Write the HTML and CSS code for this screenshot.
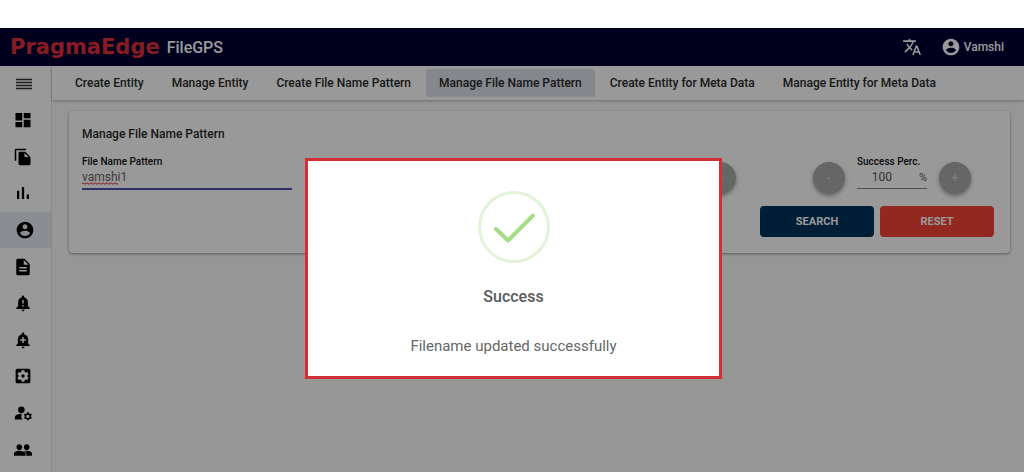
FILE: index.html
```html
<!DOCTYPE html>
<html lang="en">
<head>
<meta charset="utf-8">
<title>FileGPS</title>
<link rel="stylesheet" href="styles.css">
</head>
<body>
<div class="app">
  <header class="topbar">
    <span class="logo">PragmaEdge</span>
    <span class="product">FileGPS</span>
    <button class="topbar-btn translate" aria-label="Change language">
      <svg class="icon-lg" viewBox="0 0 24 24"><path d="M12.65 15.67c.14-.36.05-.77-.23-1.05l-2.09-2.06.03-.03c1.74-1.94 2.98-4.17 3.71-6.53h1.94c.54 0 .99-.45.99-.99v-.02c0-.54-.45-.99-.99-.99H10V3c0-.55-.45-1-1-1s-1 .45-1 1v1H1.99c-.54 0-.99.45-.99.99 0 .55.45.99.99.99h10.18C11.5 7.92 10.44 9.75 9 11.35c-.81-.89-1.49-1.86-2.06-2.88-.16-.29-.45-.47-.78-.47-.69 0-1.13.75-.79 1.35.63 1.13 1.4 2.21 2.3 3.21L3.3 16.87c-.4.39-.4 1.03 0 1.42.39.39 1.02.39 1.42 0L9 14l2.02 2.02c.51.51 1.38.32 1.63-.35zM17.5 10c-.6 0-1.14.37-1.35.94l-3.67 9.8c-.24.61.22 1.26.87 1.26.39 0 .74-.24.88-.61l.89-2.39h4.75l.9 2.39c.14.36.49.61.88.61.65 0 1.11-.65.88-1.26l-3.67-9.8c-.22-.57-.76-.94-1.36-.94zm-1.62 7 1.62-4.33L19.12 17h-3.24z"/></svg>
    </button>
    <button class="topbar-btn">
      <svg class="icon-lg" viewBox="0 0 24 24"><path d="M12 2C6.480 2 2 6.480 2 12s4.480 10 10 10 10-4.480 10-10S17.520 2 12 2zm0 3c1.660 0 3 1.340 3 3s-1.340 3-3 3-3-1.340-3-3 1.340-3 3-3zm0 14.200c-2.500 0-4.710-1.280-6-3.220.03-1.990 4-3.080 6-3.080 1.990 0 5.970 1.090 6 3.080-1.290 1.940-3.500 3.220-6 3.220z"/></svg>
      Vamshi
    </button>
  </header>
  <div class="body">
    <aside class="sidebar">
      <button class="side-item menu" aria-label="Menu"><svg class="icon" viewBox="0 0 18 18"><path d="M1 4.500h16M1 7.500h16M1 10.500h16M1 13.500h16" stroke="currentColor" stroke-width="1.300"/></svg></button>
      <nav class="side-list" aria-label="Main">
        <a class="side-item" href="#" aria-label="Dashboard"><svg class="icon" viewBox="0 0 24 24"><path d="M2 12.500h9V2.500H2v10zm0 9h9v-7H2v7zm11 0h9v-10h-9v10zm0-19v7h9v-7h-9z"/></svg></a>
        <a class="side-item" href="#" aria-label="Files"><svg class="icon" viewBox="0 0 24 24"><path d="M16 1H3c-1.100 0-2 .9-2 2v14h2V3h13V1zm-1 4 7 7v9c0 1.100-.9 2-2 2H7.990C6.890 23 6 22.100 6 21l.01-14c0-1.100.89-2 1.990-2h7zm-1 7h5.500L14 6.500V12z"/></svg></a>
        <a class="side-item" href="#" aria-label="Reports"><svg class="icon" viewBox="0 0 24 24"><path d="M4 9h3v11H4zM10.500 4h3v16h-3zM17 14h3v6h-3z"/></svg></a>
        <a class="side-item active" href="#" aria-label="Entities"><svg class="icon-lg" viewBox="0 0 24 24"><path d="M12 2C6.480 2 2 6.480 2 12s4.480 10 10 10 10-4.480 10-10S17.520 2 12 2zm0 3c1.660 0 3 1.340 3 3s-1.340 3-3 3-3-1.340-3-3 1.340-3 3-3zm0 14.200c-2.500 0-4.710-1.280-6-3.220.03-1.990 4-3.080 6-3.080 1.990 0 5.970 1.090 6 3.080-1.290 1.940-3.500 3.220-6 3.220z"/></svg></a>
        <a class="side-item" href="#" aria-label="Documents"><svg class="icon" viewBox="0 0 24 24"><path d="M14 1H5c-1.100 0-1.990.9-1.990 2L3 21c0 1.100.89 2 1.990 2H19c1.100 0 2-.9 2-2V8l-7-7zm3 17H7v-2h10v2zm0-4H7v-2h10v2zm-4-5V2.500L19.500 9H13z"/></svg></a>
        <a class="side-item" href="#" aria-label="Alerts"><svg class="icon" viewBox="0 0 24 24"><path d="M18.500 16v-5c0-3.300-1.900-5.900-5-6.600V3.500c0-.83-.67-1.500-1.500-1.500s-1.500.67-1.500 1.500v.9c-3.100.7-5 3.300-5 6.600v5l-2.500 2.500V20h18v-1.500L18.500 16zM13 16.500h-2v-2h2v2zm0-4h-2V8h2v4.500zM12 23c1.100 0 2-.9 2-2h-4c0 1.100.89 2 2 2z"/></svg></a>
        <a class="side-item" href="#" aria-label="Add alert"><svg class="icon" viewBox="0 0 24 24"><path d="M10.010 21.010c0 1.100.89 1.990 1.990 1.990s1.990-.89 1.990-1.990h-3.980zM18.880 16.820V11c0-3.250-2.250-5.970-5.290-6.690v-.72C13.590 2.710 12.880 2 12 2s-1.590.71-1.590 1.590v.72C7.370 5.030 5.120 7.750 5.120 11v5.820L3 18.940V20h18v-1.060l-2.120-2.120zM16 13.010h-3v3h-2v-3H8V11h3V8h2v3h3v2.010z"/></svg></a>
        <a class="side-item" href="#" aria-label="Settings"><svg class="icon" viewBox="1 1 22 22"><path d="M12 10c-1.100 0-2 .9-2 2s.9 2 2 2 2-.9 2-2-.9-2-2-2zm7-7H5c-1.110 0-2 .9-2 2v14c0 1.100.89 2 2 2h14c1.110 0 2-.9 2-2V5c0-1.100-.89-2-2-2zm-1.750 9c0 .23-.02.46-.05.68l1.480 1.160c.13.11.17.3.08.45l-1.400 2.420c-.09.15-.27.21-.43.15l-1.740-.7c-.36.28-.76.51-1.180.69l-.26 1.850c-.03.17-.18.3-.35.3h-2.800c-.17 0-.32-.13-.35-.29l-.26-1.850c-.43-.18-.82-.41-1.180-.69l-1.740.7c-.16.06-.34 0-.43-.15l-1.400-2.420c-.09-.15-.05-.34.08-.45l1.480-1.160c-.03-.23-.05-.46-.05-.69 0-.23.02-.46.05-.68l-1.480-1.160c-.13-.11-.17-.3-.08-.45l1.400-2.420c.09-.15.27-.21.43-.15l1.740.7c.36-.28.76-.51 1.180-.69l.26-1.850c.03-.17.18-.3.35-.3h2.800c.17 0 .32.13.35.29l.26 1.850c.43.18.82.41 1.180.69l1.740-.7c.16-.06.34 0 .43.15l1.400 2.420c.09.15.05.34-.08.45l-1.480 1.160c.03.23.05.46.05.69z"/></svg></a>
        <a class="side-item" href="#" aria-label="Manage accounts"><svg class="icon" viewBox="1 1 22 22"><circle cx="10" cy="8" r="4"/><path d="M10.670 13.020C10.450 13.010 10.230 13 10 13c-2.420 0-4.680.67-6.610 1.820-.88.52-1.390 1.500-1.390 2.530V20h9.260c-.79-1.130-1.260-2.510-1.260-4 0-1.070.25-2.070.67-2.980zM21.750 16c0-.22-.03-.42-.06-.63l1.140-1.010-1-1.730-1.450.49c-.32-.27-.68-.48-1.080-.63L19 11h-2l-.3 1.490c-.4.150-.76.360-1.080.63l-1.450-.49-1 1.730 1.140 1.010c-.03.21-.06.41-.06.63s.03.42.06.63l-1.140 1.010 1 1.730 1.450-.49c.32.27.68.48 1.080.63L17 21h2l.3-1.490c.4-.15.76-.36 1.080-.63l1.450.49 1-1.730-1.140-1.010c.03-.21.06-.41.06-.63zM18 18c-1.100 0-2-.9-2-2s.9-2 2-2 2 .9 2 2-.9 2-2 2z"/></svg></a>
        <a class="side-item" href="#" aria-label="Groups"><svg class="icon" viewBox="1 1 22 22"><path d="M16.500 13c-1.200 0-3.070.34-4.500 1-1.430-.67-3.300-1-4.500-1C5.330 13 1 14.080 1 16.250V19h22v-2.750c0-2.170-4.330-3.250-6.500-3.250zM7.500 12c1.930 0 3.500-1.570 3.500-3.500S9.430 5 7.500 5 4 6.570 4 8.500 5.570 12 7.500 12zm9 0c1.930 0 3.500-1.570 3.500-3.500S18.430 5 16.500 5 13 6.570 13 8.500s1.570 3.500 3.500 3.500z"/><path class="seam" d="M13.300 13c1.500 1 2.200 2 2.200 3.300V19"/></svg></a>
      </nav>
    </aside>
    <div class="content">
      <nav class="tabs" aria-label="Sections">
        <a class="tab" href="#">Create Entity</a>
        <a class="tab" href="#">Manage Entity</a>
        <a class="tab" href="#">Create File Name Pattern</a>
        <a class="tab selected" href="#" aria-current="page">Manage File Name Pattern</a>
        <a class="tab" href="#">Create Entity for Meta Data</a>
        <a class="tab" href="#">Manage Entity for Meta Data</a>
      </nav>
      <main class="card">
        <h1 class="card-title">Manage File Name Pattern</h1>
        <form class="form">
          <div class="fields">
            <div class="field name-field">
              <label class="label" for="pattern">File Name Pattern</label>
              <input class="input" id="pattern" type="text" value="vamshi1" spellcheck="false">
              <svg class="squiggle" viewBox="0 0 36 3"><path d="M0 2 Q1 0 2 1.500 T4 1.500 T6 1.500 T8 1.500 T10 1.500 T12 1.500 T14 1.500 T16 1.500 T18 1.500 T20 1.500 T22 1.500 T24 1.500 T26 1.500 T28 1.500 T30 1.500 T32 1.500 T34 1.500 T36 1.500"/></svg>
            </div>
            <div class="steppers">
              <button class="round" type="button">+</button>
              <div class="stepper">
                <button class="round" type="button">-</button>
                <div class="field perc-field">
                  <label class="label" for="perc">Success Perc.</label>
                  <div class="perc-box"><input class="perc-input" id="perc" type="text" value="100"><span class="unit">%</span></div>
                </div>
                <button class="round" type="button">+</button>
              </div>
            </div>
          </div>
          <div class="actions">
            <button class="action search" type="button">SEARCH</button>
            <button class="action reset" type="button">RESET</button>
          </div>
        </form>
      </main>
    </div>
  </div>
  <div class="overlay">
    <div class="modal" role="dialog" aria-labelledby="modal-title">
      <svg class="success-icon" viewBox="0 0 72 72"><circle cx="36" cy="36" r="34.500"/><path d="M18 38l12 11.500L55 24.500"/></svg>
      <h2 class="modal-title" id="modal-title">Success</h2>
      <p class="modal-text">Filename updated successfully</p>
    </div>
  </div>
</div>
</body>
</html>
```
FILE: styles.css
```css
* { box-sizing: border-box; }
body {
  margin: 0;
  padding-top: 28px;
  background: #fff;
  font-family: Roboto, "Liberation Sans", sans-serif;
  font-size: 12px;
  color: #2a2a2a;
}
button, input { font: inherit; color: inherit; border: 0; background: none; padding: 0; }
a { color: inherit; text-decoration: none; }
svg { display: block; fill: currentColor; }

.app {
  position: relative;
  display: flex;
  flex-direction: column;
  min-height: calc(100vh - 28px);
  background: #fafafa;
}
.topbar {
  display: flex;
  align-items: center;
  height: 38px;
  padding: 0 20px 0 10px;
  background: #000033;
  color: #fff;
}
.logo {
  font: bold 21px "DejaVu Sans", sans-serif;
  color: #e0303a;
}
.product { margin-left: 7px; font-size: 16px; font-weight: 500; }
.topbar-btn { display: flex; align-items: center; gap: 3px; font-weight: 500; }
.translate { margin-left: auto; margin-right: 19px; }
.icon { width: 18px; height: 18px; }
.icon-lg { width: 20px; height: 20px; }

.body { display: flex; flex: 1; }
.sidebar {
  display: flex;
  flex-direction: column;
  width: 52px;
  padding-bottom: 4px;
  background: #fff;
  border-right: 1px solid #e4e4e4;
  color: #000;
}
.side-list { display: flex; flex-direction: column; flex: 1; }
.side-item {
  display: flex;
  flex: 1;
  align-items: center;
  padding-left: 14px;
}
.menu { flex: 0 0 36px; padding-left: 15px; color: #333; }
.active { background: #e6ebf2; padding-left: 15px; }
.seam { fill: none; stroke: #fff; stroke-width: 1; }

.content { flex: 1; min-width: 0; }
.tabs {
  display: flex;
  gap: 2px;
  height: 34px;
  padding: 3px 10px;
  background: #fff;
  box-shadow: 0 1px 3px rgba(0, 0, 0, .25);
}
.tab {
  display: flex;
  align-items: center;
  padding: 0 13px;
  border-radius: 3px;
  font-weight: 500;
  white-space: nowrap;
}
.selected { background: #dde1ea; }

.card {
  margin: 11px 14px 0 17px;
  padding: 16px 13px;
  background: #fff;
  border-radius: 4px;
  box-shadow: 0 1px 3px rgba(0, 0, 0, .4);
}
.card-title { margin: 0 0 14px; font-size: 12px; line-height: 14px; font-weight: 500; }
.fields { display: flex; align-items: flex-start; justify-content: space-between; }
.field { display: flex; flex-direction: column; }
.name-field { position: relative; width: 23%; }
.label { font-size: 10px; line-height: 14px; font-weight: 500; color: #111; white-space: nowrap; }
.input { height: 21px; padding-bottom: 3px; border-bottom: 2px solid #5050b0; font-size: 12px; color: #666; outline: 0; }
.squiggle { position: absolute; left: 0; top: 27px; width: 36px; height: 3px; fill: none; stroke: #e03030; }
.steppers { display: flex; align-items: flex-end; gap: 77px; padding-right: 26px; }
.stepper { display: flex; align-items: flex-start; gap: 12px; }
.round {
  width: 32px;
  height: 32px;
  margin-top: 7px;
  border-radius: 50%;
  background: #aaa;
  color: #ddd;
  box-shadow: 0 2px 4px rgba(0, 0, 0, .35);
}
.perc-field { width: 70px; }
.perc-box { display: flex; height: 20px; padding-bottom: 3px; border-bottom: 1px solid #888; color: #555; }
.perc-input { flex: 1; min-width: 0; text-align: center; padding-right: 12px; outline: 0; }
.unit { align-self: center; font-size: 11px; }
.actions { display: flex; justify-content: flex-end; gap: 6px; padding: 12px 3px 0 0; }
.action {
  width: 114px;
  height: 31px;
  border-radius: 4px;
  color: #fff;
  font-size: 11px;
  font-weight: 700;
}
.search { background: #00325a; }
.reset { background: #f44336; }

.overlay {
  position: absolute;
  inset: 0;
  display: flex;
  justify-content: center;
  align-items: flex-start;
  padding: 130px 0 0 3px;
  background: rgba(0, 0, 0, .4);
}
.modal {
  display: flex;
  flex-direction: column;
  align-items: center;
  width: 100%;
  max-width: 417px;
  padding: 30px 16px 20px;
  background: #fff;
  border: 3px solid #d32f36;
  text-align: center;
}
.success-icon { width: 72px; height: 72px; fill: none; stroke: #a5dc86; stroke-linecap: round; stroke-linejoin: round; stroke-width: 4; }
.success-icon circle { stroke: #e1f3d8; stroke-width: 3; }
.modal-title { margin: 23px 0 0; font-size: 16px; line-height: 22px; font-weight: 500; color: #595959; }
.modal-text { margin: 28px 0 0; font-size: 15px; line-height: 20px; color: #666; }
```
